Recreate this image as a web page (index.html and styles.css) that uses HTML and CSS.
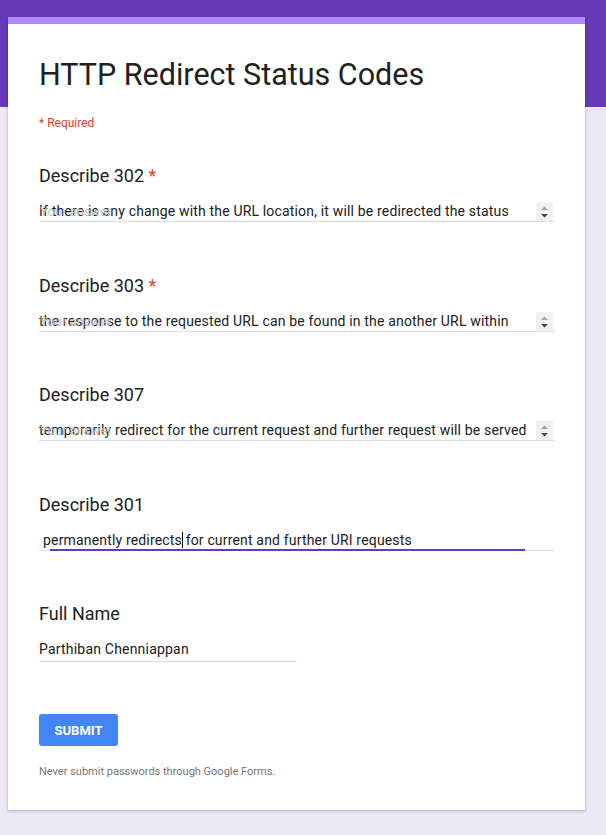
FILE: index.html
```html
<!DOCTYPE html>
<html lang="en">
<head>
<meta charset="utf-8">
<title>HTTP Redirect Status Codes</title>
<link rel="stylesheet" href="styles.css">
</head>
<body>
<div class="card">
  <h1 class="title">HTTP Redirect Status Codes</h1>
  <div class="required-note">* Required</div>

  <div class="question">
    <div class="label">Describe 302 <span class="star">*</span></div>
    <div class="field">
      <span class="ghost">Your answer</span>
      <span class="answer">If there is any change with the URL location, it will be redirected the status</span>
      <svg class="spin" width="17" height="19" viewBox="0 0 17 19"><rect width="17" height="19" fill="#f1f1f1"/><path d="M5 8 L8.5 4.5 L12 8 Z" fill="#a6a6a6"/><path d="M5 12 L12 12 L8.5 15.5 Z" fill="#454545"/></svg>
    </div>
  </div>

  <div class="question">
    <div class="label">Describe 303 <span class="star">*</span></div>
    <div class="field">
      <span class="ghost">Your answer</span>
      <span class="answer">the response to the requested URL can be found in the another URL within</span>
      <svg class="spin" width="17" height="19" viewBox="0 0 17 19"><rect width="17" height="19" fill="#f1f1f1"/><path d="M5 8 L8.5 4.5 L12 8 Z" fill="#a6a6a6"/><path d="M5 12 L12 12 L8.5 15.5 Z" fill="#454545"/></svg>
    </div>
  </div>

  <div class="question">
    <div class="label">Describe 307</div>
    <div class="field">
      <span class="ghost">Your answer</span>
      <span class="answer">temporarily redirect for the current request and further request will be served</span>
      <svg class="spin" width="17" height="19" viewBox="0 0 17 19"><rect width="17" height="19" fill="#f1f1f1"/><path d="M5 8 L8.5 4.5 L12 8 Z" fill="#a6a6a6"/><path d="M5 12 L12 12 L8.5 15.5 Z" fill="#454545"/></svg>
    </div>
  </div>

  <div class="question">
    <div class="label">Describe 301</div>
    <div class="field focused">
      <span class="answer indent">permanently redirects<span class="caret"></span> for current and further URI requests</span>
    </div>
  </div>

  <div class="question">
    <div class="label">Full Name</div>
    <div class="field short">
      <span class="answer">Parthiban Chenniappan</span>
    </div>
  </div>

  <button class="submit" type="button">SUBMIT</button>
  <p class="note">Never submit passwords through Google Forms.</p>
</div>
</body>
</html>
```
FILE: styles.css
```css
html, body {
  margin: 0;
  padding: 0;
}
body {
  height: 835px;
  overflow: hidden;
  background: linear-gradient(#673ab7 0, #673ab7 107px, #ede7f6 107px, #ede7f6 100%);
  font-family: Roboto, "Noto Sans", Arial, sans-serif;
  color: #212121;
}
.card {
  box-sizing: border-box;
  width: 577px;
  margin: 17px 0 0 8px;
  background: #fff;
  border-top: 7px solid #b388ff;
  padding: 34px 30px 31px 31px;
  box-shadow: 0 1px 3px rgba(0,0,0,0.25);
}
.title {
  margin: 0;
  font-size: 30.5px;
  line-height: 34px;
  font-weight: 400;
  color: #212121;
}
.required-note {
  margin-top: 23px;
  font-size: 12px;
  line-height: 16px;
  color: #d23f31;
}
.question {
  margin-top: 33px;
}
.question + .question {
  margin-top: 51.5px;
}
.label {
  font-size: 18px;
  line-height: 24px;
  color: #212121;
}
.star {
  color: #db4437;
}
.field {
  position: relative;
  display: flex;
  align-items: flex-start;
  margin-top: 13px;
  height: 20px;
  border-bottom: 1px solid #e0e0e0;
}
.answer {
  flex: 1;
  font-size: 14px;
  line-height: 20px;
  letter-spacing: 0.17px;
  color: #202020;
  white-space: nowrap;
  overflow: hidden;
}
.answer.indent {
  padding-left: 4px;
}
.ghost {
  position: absolute;
  left: 1px;
  top: 1px;
  font-size: 13px;
  line-height: 20px;
  color: #c4c4c4;
}
.spin {
  display: block;
  margin-top: 1px;
  margin-right: 2px;
  flex: none;
}
.field.focused::after {
  content: "";
  position: absolute;
  left: 11px;
  right: 30px;
  bottom: -1px;
  height: 2px;
  background: #673ab7;
}
.caret {
  display: inline-block;
  width: 1px;
  height: 16px;
  margin-right: -1px;
  vertical-align: -3px;
  background: #000;
}
.field.short {
  width: 258px;
  height: 22px;
  margin-top: 13px;
}
.field.short .answer {
  letter-spacing: 0.2px;
}
.submit {
  display: block;
  margin-top: 52px;
  width: 79px;
  height: 32px;
  border: 0;
  border-radius: 3px;
  background: #4285f4;
  color: #fff;
  font-family: Roboto, Arial, sans-serif;
  font-size: 13px;
  font-weight: 700;
  padding: 0;
}
.note {
  margin: 19px 0 0;
  font-size: 11px;
  line-height: 14px;
  color: #757575;
}
```
